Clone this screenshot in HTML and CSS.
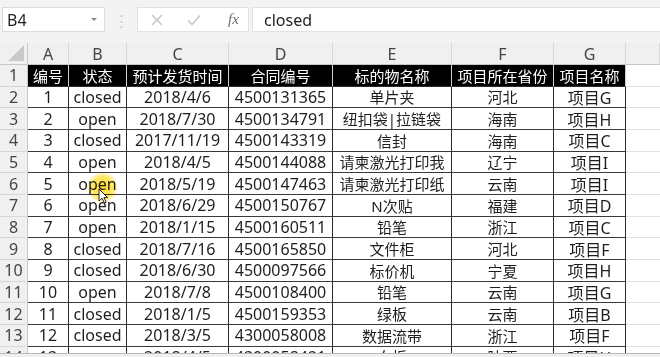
FILE: index.html
```html
<!DOCTYPE html>
<html>
<head>
    <meta charset="utf-8" />
    <title>工作表</title>
    <link rel="stylesheet" href="styles.css">
</head>
<body>
    <div class="bar">
        <div class="namebox"><span>B4</span><i class="drop"></i></div>
        <div class="grip">&#8942;</div>
        <div class="btns">
            <svg class="ico" width="14" height="14" viewBox="0 0 14 14"><path d="M2 2 L12 12 M12 2 L2 12" stroke="#c4c4c4" stroke-width="1.4" fill="none"/></svg>
            <svg class="ico" width="16" height="14" viewBox="0 0 16 14"><path d="M2 7.5 L6 11.5 L14 2.5" stroke="#c4c4c4" stroke-width="1.4" fill="none"/></svg>
            <span class="fx">fx</span>
        </div>
        <div class="formula">closed</div>
    </div>

    <div class="sheet">
        <div class="corner"><i></i></div>
        <div class="ch">A</div><div class="ch">B</div><div class="ch">C</div><div class="ch">D</div><div class="ch">E</div><div class="ch">F</div><div class="ch">G</div><div class="ch"></div>

        <div class="rh">1</div>
        <div class="hd">编号</div><div class="hd">状态</div><div class="hd">预计发货时间</div><div class="hd">合同编号</div><div class="hd">标的物名称</div><div class="hd">项目所在省份</div><div class="hd">项目名称</div><div class="gap"></div>

        <div class="rh">2</div>
        <div class="c">1</div><div class="c">closed</div><div class="c">2018/4/6</div><div class="c">4500131365</div><div class="c zh">单片夹</div><div class="c zh">河北</div><div class="c">项目G</div><div class="gap"></div>

        <div class="rh">3</div>
        <div class="c">2</div><div class="c">open</div><div class="c">2018/7/30</div><div class="c">4500134791</div><div class="c zh">纽扣袋|拉链袋</div><div class="c zh">海南</div><div class="c">项目H</div><div class="gap"></div>

        <div class="rh">4</div>
        <div class="c">3</div><div class="c">closed</div><div class="c">2017/11/19</div><div class="c">4500143319</div><div class="c zh">信封</div><div class="c zh">海南</div><div class="c">项目C</div><div class="gap"></div>

        <div class="rh">5</div>
        <div class="c">4</div><div class="c">open</div><div class="c">2018/4/5</div><div class="c">4500144088</div><div class="c zh">请柬激光打印我</div><div class="c zh">辽宁</div><div class="c">项目I</div><div class="gap"></div>

        <div class="rh">6</div>
        <div class="c">5</div><div class="c">open</div><div class="c">2018/5/19</div><div class="c">4500147463</div><div class="c zh">请柬激光打印纸</div><div class="c zh">云南</div><div class="c">项目I</div><div class="gap"></div>

        <div class="rh">7</div>
        <div class="c">6</div><div class="c">open</div><div class="c">2018/6/29</div><div class="c">4500150767</div><div class="c zh">N次贴</div><div class="c zh">福建</div><div class="c">项目D</div><div class="gap"></div>

        <div class="rh">8</div>
        <div class="c">7</div><div class="c">open</div><div class="c">2018/1/15</div><div class="c">4500160511</div><div class="c zh">铅笔</div><div class="c zh">浙江</div><div class="c">项目C</div><div class="gap"></div>

        <div class="rh">9</div>
        <div class="c">8</div><div class="c">closed</div><div class="c">2018/7/16</div><div class="c">4500165850</div><div class="c zh">文件柜</div><div class="c zh">河北</div><div class="c">项目F</div><div class="gap"></div>

        <div class="rh">10</div>
        <div class="c">9</div><div class="c">closed</div><div class="c">2018/6/30</div><div class="c">4500097566</div><div class="c zh">标价机</div><div class="c zh">宁夏</div><div class="c">项目H</div><div class="gap"></div>

        <div class="rh">11</div>
        <div class="c">10</div><div class="c">open</div><div class="c">2018/7/8</div><div class="c">4500108400</div><div class="c zh">铅笔</div><div class="c zh">云南</div><div class="c">项目G</div><div class="gap"></div>

        <div class="rh">12</div>
        <div class="c">11</div><div class="c">closed</div><div class="c">2018/1/5</div><div class="c">4500159353</div><div class="c zh">绿板</div><div class="c zh">云南</div><div class="c">项目B</div><div class="gap"></div>

        <div class="rh">13</div>
        <div class="c">12</div><div class="c">closed</div><div class="c">2018/3/5</div><div class="c">4300058008</div><div class="c zh">数据流带</div><div class="c zh">浙江</div><div class="c">项目F</div><div class="gap"></div>

        <div class="rh">14</div>
        <div class="c">13</div><div class="c">open</div><div class="c">2018/4/5</div><div class="c">4300058421</div><div class="c zh">白板</div><div class="c zh">陕西</div><div class="c">项目H</div><div class="gap"></div>
    </div>
    <div class="foot"></div>

    <!-- 鼠标高亮 -->
    <div class="spot"></div>
    <svg class="pointer" width="11" height="16" viewBox="0 0 11 16"><path d="M1 1 L1 13 L4 10.2 L6.4 15 L8.2 14.2 L5.9 9.6 L9.6 9.6 Z" fill="#fff" stroke="#222" stroke-width="1"/></svg>
</body>
</html>
```

FILE: styles.css
```css
html, body {
    overflow: hidden;
}

body {
    margin: 0;
    width: 660px;
    height: 357px;
    background: #fff;
    font-family: "Noto Sans", "Noto Sans CJK SC", sans-serif;
    color: #1e1e1e;
    position: relative;
}

/* 编辑栏 */
.bar {
    height: 43px;
    box-sizing: border-box;
    padding-top: 7px;
    background: #f3f3f3;
    display: flex;
    align-items: flex-start;
}

.namebox {
    margin-left: 2px;
    width: 103px;
    height: 25px;
    box-sizing: border-box;
    background: #fff;
    border: 1px solid #dcdcdc;
    display: flex;
    align-items: center;
    justify-content: space-between;
    padding: 0 7px 0 4px;
    font-size: 16px;
}

    .namebox .drop {
        width: 0;
        height: 0;
        border-left: 3px solid transparent;
        border-right: 3px solid transparent;
        border-top: 3px solid #8a8a8a;
    }

.grip {
    width: 32px;
    height: 25px;
    display: flex;
    align-items: center;
    justify-content: center;
    color: #c8c8c8;
    font-size: 15px;
}

.btns {
    width: 112px;
    height: 25px;
    box-sizing: border-box;
    background: #fff;
    border: 1px solid #e2e2e2;
    display: flex;
    align-items: center;
    padding-left: 12px;
    gap: 22px;
}

    .btns .fx {
        margin-left: 4px;
        font-family: "Liberation Serif", serif;
        font-style: italic;
        font-size: 15px;
        color: #6e6e6e;
    }

.formula {
    margin-left: 3px;
    flex: 1;
    height: 25px;
    box-sizing: border-box;
    background: #fff;
    border: 1px solid #e2e2e2;
    border-right: 0;
    padding-left: 11px;
    display: flex;
    align-items: center;
    font-size: 16px;
}

/* 表格 */
.sheet {
    height: 310px;
    overflow: hidden;
    display: grid;
    grid-template-columns: 28px 41px 58px 102px 104px 119px 102px 72px 1fr;
    grid-template-rows: 22px repeat(14, 21.67px);
    font-size: 16px;
}

    .sheet > div {
        box-sizing: border-box;
        display: flex;
        align-items: center;
        justify-content: center;
        white-space: nowrap;
        overflow: hidden;
    }

.corner {
    background: #f0f0f0;
    border-right: 1px solid #c6c6c6;
    border-bottom: 1px solid #c6c6c6;
    position: relative;
}

    .corner i {
        position: absolute;
        right: 3px;
        bottom: 3px;
        width: 0;
        height: 0;
        border-left: 16px solid transparent;
        border-bottom: 16px solid #c9c9c9;
    }

.ch {
    background: #f0f0f0;
    color: #444;
    border-right: 1px solid #d6d6d6;
    border-bottom: 1px solid #c6c6c6;
}

.rh {
    background: #f0f0f0;
    color: #444;
    border-right: 1px solid #c6c6c6;
    border-bottom: 1px solid #d6d6d6;
}

.hd {
    background: #000;
    color: #fff;
    font-size: 15px;
    border-right: 1px solid #cfcfcf;
    border-bottom: 1px solid #2b2b2b;
}

.c {
    border-right: 1px solid #2b2b2b;
    border-bottom: 1px solid #3a3a3a;
}

    .c.zh {
        font-size: 15px;
    }

.gap {
    border-bottom: 1px solid #e1e1e1;
}

.foot {
    height: 4px;
    box-sizing: border-box;
    background: #f0f0f0;
    border-top: 1px solid #b9b9b9;
}

/* 鼠标 */
.spot {
    position: absolute;
    left: 87px;
    top: 172px;
    width: 31px;
    height: 31px;
    border-radius: 50%;
    background: radial-gradient(circle, rgba(255, 214, 20, 0.85) 0, rgba(255, 220, 40, 0.7) 50%, rgba(255, 230, 60, 0) 72%);
    mix-blend-mode: multiply;
}

.pointer {
    position: absolute;
    left: 98px;
    top: 188px;
}
```
